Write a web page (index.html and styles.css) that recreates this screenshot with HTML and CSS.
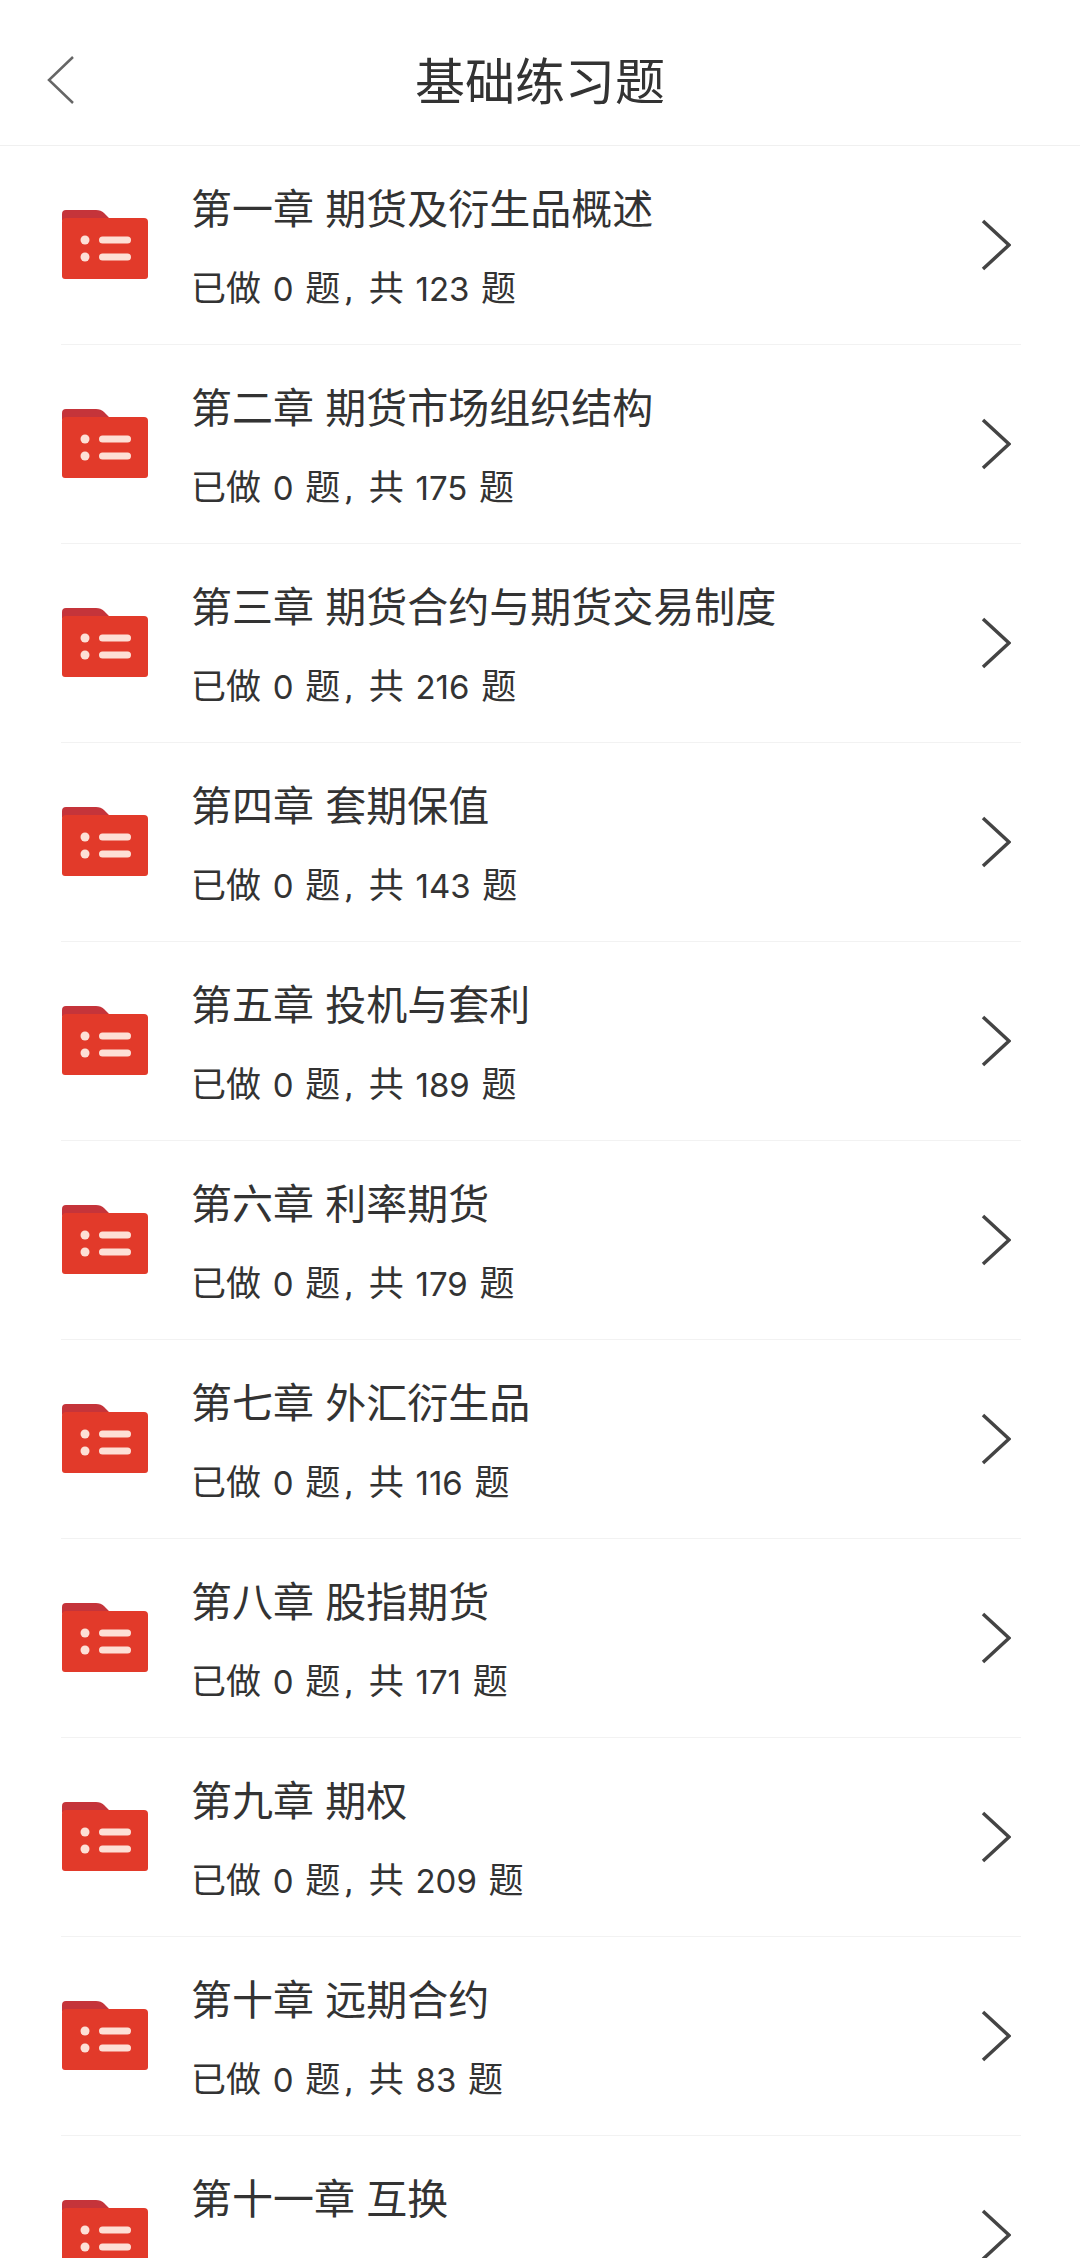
FILE: index.html
```html
<!DOCTYPE html>
<html lang="zh-CN">
<head>
	<meta charset="UTF-8">
	<meta name="viewport" content="width=device-width, initial-scale=1.0">
	<title>基础练习题</title>
	<link rel="stylesheet" href="styles.css">
</head>
<body>
	<svg class="defs" width="0" height="0">
		<defs>
			<symbol id="folder" viewBox="0 0 86 70">
				<path d="M0 5a4 4 0 0 1 4-4h30q5 0 8 3l6 6H4a4 4 0 0 0-4 4z" fill="#c5343a"/>
				<path d="M0 13a4 4 0 0 1 4-4h78a4 4 0 0 1 4 4v54a3 3 0 0 1-3 3H3a3 3 0 0 1-3-3z" fill="#e23a2a"/>
				<circle cx="23" cy="31" r="4.5" fill="#fde0d6"/>
				<circle cx="23" cy="48" r="4.5" fill="#fde0d6"/>
				<rect x="37" y="27.5" width="32" height="7" rx="3.5" fill="#fde0d6"/>
				<rect x="37" y="44.5" width="32" height="7" rx="3.5" fill="#fde0d6"/>
			</symbol>
			<symbol id="arrow" viewBox="0 0 30 52">
				<path d="M2 2l26 24L2 50" fill="none" stroke="#444" stroke-width="3.5"/>
			</symbol>
		</defs>
	</svg>
	<div class="header">
		<svg class="back" viewBox="0 0 28 48"><path d="M27 1L3 24l24 23" fill="none" stroke="#666" stroke-width="2.5"/></svg>
		<div class="title">基础练习题</div>
	</div>
	<div class="list">
		<div class="item">
			<svg class="folder"><use href="#folder"/></svg>
			<div class="info"><div class="name">第一章 期货及衍生品概述</div><div class="count">已做 <span class="num">0</span> 题<span class="sep">,</span> 共 <span class="num">123</span> 题</div></div>
			<svg class="arrow"><use href="#arrow"/></svg>
		</div>
		<div class="item">
			<svg class="folder"><use href="#folder"/></svg>
			<div class="info"><div class="name">第二章 期货市场组织结构</div><div class="count">已做 <span class="num">0</span> 题<span class="sep">,</span> 共 <span class="num">175</span> 题</div></div>
			<svg class="arrow"><use href="#arrow"/></svg>
		</div>
		<div class="item">
			<svg class="folder"><use href="#folder"/></svg>
			<div class="info"><div class="name">第三章 期货合约与期货交易制度</div><div class="count">已做 <span class="num">0</span> 题<span class="sep">,</span> 共 <span class="num">216</span> 题</div></div>
			<svg class="arrow"><use href="#arrow"/></svg>
		</div>
		<div class="item">
			<svg class="folder"><use href="#folder"/></svg>
			<div class="info"><div class="name">第四章 套期保值</div><div class="count">已做 <span class="num">0</span> 题<span class="sep">,</span> 共 <span class="num">143</span> 题</div></div>
			<svg class="arrow"><use href="#arrow"/></svg>
		</div>
		<div class="item">
			<svg class="folder"><use href="#folder"/></svg>
			<div class="info"><div class="name">第五章 投机与套利</div><div class="count">已做 <span class="num">0</span> 题<span class="sep">,</span> 共 <span class="num">189</span> 题</div></div>
			<svg class="arrow"><use href="#arrow"/></svg>
		</div>
		<div class="item">
			<svg class="folder"><use href="#folder"/></svg>
			<div class="info"><div class="name">第六章 利率期货</div><div class="count">已做 <span class="num">0</span> 题<span class="sep">,</span> 共 <span class="num">179</span> 题</div></div>
			<svg class="arrow"><use href="#arrow"/></svg>
		</div>
		<div class="item">
			<svg class="folder"><use href="#folder"/></svg>
			<div class="info"><div class="name">第七章 外汇衍生品</div><div class="count">已做 <span class="num">0</span> 题<span class="sep">,</span> 共 <span class="num">116</span> 题</div></div>
			<svg class="arrow"><use href="#arrow"/></svg>
		</div>
		<div class="item">
			<svg class="folder"><use href="#folder"/></svg>
			<div class="info"><div class="name">第八章 股指期货</div><div class="count">已做 <span class="num">0</span> 题<span class="sep">,</span> 共 <span class="num">171</span> 题</div></div>
			<svg class="arrow"><use href="#arrow"/></svg>
		</div>
		<div class="item">
			<svg class="folder"><use href="#folder"/></svg>
			<div class="info"><div class="name">第九章 期权</div><div class="count">已做 <span class="num">0</span> 题<span class="sep">,</span> 共 <span class="num">209</span> 题</div></div>
			<svg class="arrow"><use href="#arrow"/></svg>
		</div>
		<div class="item">
			<svg class="folder"><use href="#folder"/></svg>
			<div class="info"><div class="name">第十章 远期合约</div><div class="count">已做 <span class="num">0</span> 题<span class="sep">,</span> 共 <span class="num">83</span> 题</div></div>
			<svg class="arrow"><use href="#arrow"/></svg>
		</div>
		<div class="item">
			<svg class="folder"><use href="#folder"/></svg>
			<div class="info"><div class="name">第十一章 互换</div><div class="count"></div></div>
			<svg class="arrow"><use href="#arrow"/></svg>
		</div>
	</div>
</body>
</html>
```

FILE: styles.css
```css
html, body {
	margin: 0;
	height: 2258px;
	overflow: hidden;
}
body {
	background-color: #fff;
	color: #333;
	font-family: "Noto Sans CJK SC", "Noto Sans", sans-serif;
}
.defs { display: block; height: 0; }
.header {
	display: flex;
	align-items: center;
	justify-content: center;
	position: relative;
	box-sizing: border-box;
	height: 146px;
	padding-top: 11px;
	border-bottom: 1px solid #f0f0f0;
}
.back {
	position: absolute;
	left: 46px;
	top: 56px;
	width: 28px;
	height: 48px;
}
.title {
	font-size: 50px;
	line-height: 60px;
	color: #333;
}
.list { padding-left: 61px; padding-right: 59px; }
.item {
	display: flex;
	align-items: center;
	height: 198px;
	border-bottom: 1px solid #f2f2f2;
}
.folder {
	flex: none;
	width: 86px;
	height: 70px;
	margin-left: 1px;
	margin-top: -2px;
}
.info {
	flex: 1;
	margin-left: 43px;
	margin-top: -2px;
}
.name {
	font-size: 41px;
	line-height: 50px;
	word-spacing: 2px;
}
.count {
	font-family: Roboto, "Noto Sans CJK SC", sans-serif;
	font-size: 35px;
	line-height: 44px;
	height: 41px;
	margin-top: 36px;
	word-spacing: 3px;
}
.num {
	font-family: Inter, Roboto, sans-serif;
	font-size: 33px;
}
.sep { margin: 0 5px; }
.arrow {
	flex: none;
	width: 30px;
	height: 52px;
	margin-right: 10px;
}
```
